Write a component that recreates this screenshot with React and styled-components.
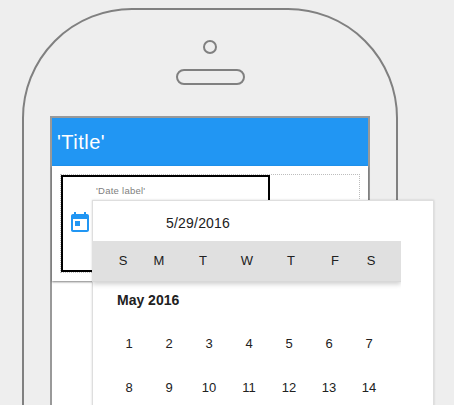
import React from 'react';
import styled, { createGlobalStyle } from 'styled-components';

const GlobalStyle = createGlobalStyle`
  *, *::before, *::after { box-sizing: border-box; }
  html, body { margin: 0; height: 100%; overflow: hidden; }
  body {
    background: #eeeeee;
    color: #212121;
    font-family: "Liberation Sans", Arial, Helvetica, sans-serif;
  }
`;

const Stage = styled.main`
  position: relative;
  height: 405px;
  padding: 8px 0 0 22px;
  overflow: hidden;
`;

const Phone = styled.div`
  display: flex;
  flex-direction: column;
  align-items: center;
  width: 376px;
  height: 760px;
  padding-top: 30px;
  border: 2px solid #808080;
  border-radius: 110px;
`;

const Camera = styled.div`
  width: 14px;
  height: 14px;
  margin-right: 1px;
  border: 2px solid #808080;
  border-radius: 50%;
`;

const Speaker = styled.div`
  width: 69px;
  height: 16px;
  margin-top: 15px;
  border: 2px solid #808080;
  border-radius: 8px;
`;

const Screen = styled.div`
  width: 320px;
  height: 568px;
  margin-top: 31px;
  border: 2px solid #999999;
  background: #ffffff;
`;

const TitleBar = styled.header`
  height: 48px;
  padding-left: 5px;
  background: #2196f3;
  color: #ffffff;
  font-size: 20px;
  letter-spacing: 0.5px;
  line-height: 48px;
`;

const Card = styled.section`
  padding: 8px;
  height: 115px;
  box-shadow: 0 1px 2px rgba(0, 0, 0, 0.5);
`;

const DropZone = styled.div`
  height: 99px;
  border: 1px dotted #bdbdbd;
`;

const DateField = styled.div`
  display: flex;
  width: 209px;
  height: 97px;
  border: 2px solid #000000;
`;

const TodayIcon = styled.svg`
  flex: none;
  width: 24px;
  height: 24px;
  margin: 34px 0 0 5px;
  fill: #2196f3;
`;

const FieldLabel = styled.span`
  margin: 7px 0 0 4px;
  color: #808080;
  font-size: 9.5px;
  letter-spacing: 0.25px;
  line-height: 14px;
`;

const DatePopup = styled.div`
  position: absolute;
  top: 201px;
  left: 93px;
  width: 340px;
  height: 340px;
  background: #ffffff;
  box-shadow: 0 0 0 1px #dedede, 0 0 2px 1px rgba(0, 0, 0, 0.16);
`;

const SelectedDate = styled.div`
  height: 40px;
  padding-left: 73px;
  font-size: 14px;
  letter-spacing: 0.2px;
  line-height: 45px;
`;

const WeekHeader = styled.div`
  display: grid;
  grid-template-columns: 28px repeat(5, 44px) 28px;
  width: 309px;
  height: 40px;
  margin-left: -1px;
  padding: 0 16px 0 17px;
  background: #e0e0e0;
  font-size: 13px;
  line-height: 40px;
  text-align: center;
  box-shadow: 0 1px 0 #d8d8d8, 0 3px 5px rgba(0, 0, 0, 0.2);
  clip-path: inset(0 0 -10px 0);
`;

const MonthName = styled.div`
  height: 40px;
  padding-left: 24px;
  font-size: 14px;
  font-weight: 700;
  line-height: 38px;
`;

const Days = styled.div`
  display: grid;
  grid-template-columns: repeat(7, 40px);
  grid-auto-rows: 44px;
  padding: 1px 0 0 16px;
  font-size: 13px;
  line-height: 44px;
  text-align: center;
`;

const WEEKDAYS = ['S', 'M', 'T', 'W', 'T', 'F', 'S'];
const DATES = Array.from({ length: 14 }, (_, i) => i + 1);

export default function App() {
  return (
    <>
      <GlobalStyle />
      <Stage>
        <Phone>
          <Camera />
          <Speaker />
          <Screen>
            <TitleBar>'Title'</TitleBar>
            <Card>
              <DropZone>
                <DateField>
                  <TodayIcon viewBox="0 0 24 24">
                    <path d="M19 3h-1V1h-2v2H8V1H6v2H5c-1.11 0-1.99.9-1.99 2L3 19c0 1.1.89 2 2 2h14c1.1 0 2-.9 2-2V5c0-1.1-.9-2-2-2zm0 16H5V8h14v11zM7 10h5v5H7z" />
                  </TodayIcon>
                  <FieldLabel>'Date label'</FieldLabel>
                </DateField>
              </DropZone>
            </Card>
          </Screen>
        </Phone>
        <DatePopup>
          <SelectedDate>5/29/2016</SelectedDate>
          <WeekHeader>
            {WEEKDAYS.map((day, i) => (
              <span key={i}>{day}</span>
            ))}
          </WeekHeader>
          <MonthName>May 2016</MonthName>
          <Days>
            {DATES.map((date) => (
              <span key={date}>{date}</span>
            ))}
          </Days>
        </DatePopup>
      </Stage>
    </>
  );
}
